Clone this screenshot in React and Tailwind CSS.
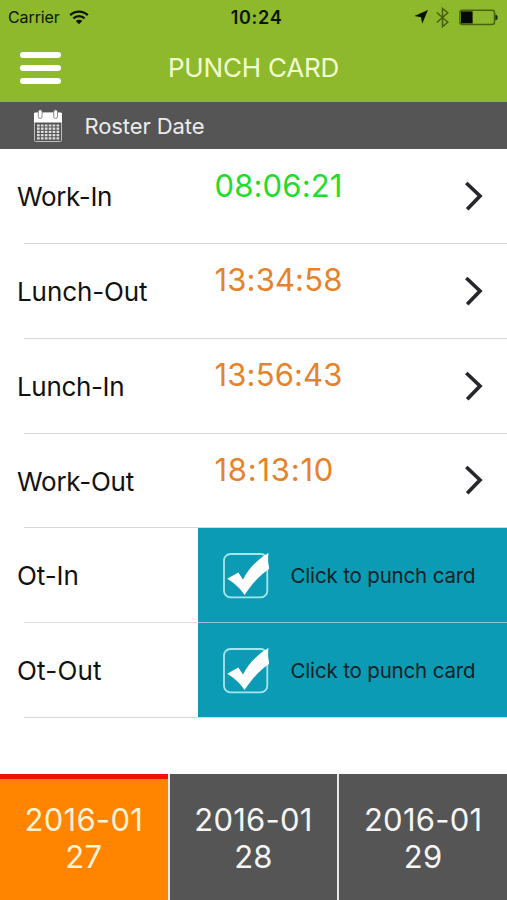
import React, { useState } from 'react';

const PUNCHES = [
  { id: 'work-in', label: 'Work-In', spacing: 'tracking-[-0.35px]', time: '08:06:21', timeClass: 'text-[#1fdd2b] tracking-[0.15px]' },
  { id: 'lunch-out', label: 'Lunch-Out', spacing: 'tracking-[-0.1px]', time: '13:34:58', timeClass: 'text-[#e8822a] tracking-[0.15px]' },
  { id: 'lunch-in', label: 'Lunch-In', spacing: 'tracking-[-0.35px]', time: '13:56:43', timeClass: 'text-[#e8822a] tracking-[0.15px]' },
  { id: 'work-out', label: 'Work-Out', spacing: 'tracking-[-0.25px]', time: '18:13:10', timeClass: 'text-[#e8822a] tracking-[0.75px]' },
  { id: 'ot-in', label: 'Ot-In', spacing: 'tracking-[-0.1px]', time: null },
  { id: 'ot-out', label: 'Ot-Out', spacing: 'tracking-[0.2px]', time: null },
];

const DAYS = [
  { month: '2016-01', day: '27' },
  { month: '2016-01', day: '28' },
  { month: '2016-01', day: '29' },
];

const StatusBar = () => (
  <div className="h-[34px] grid grid-cols-[1fr_60px_1fr] items-center pl-[8px] pr-[9px] text-[#0b1402]">
    <div className="flex items-center gap-[9px]">
      <span className="text-[16px] leading-none tracking-[-0.1px]">Carrier</span>
      <svg width="20" height="15" viewBox="0 0 20 15" fill="none" stroke="currentColor" strokeWidth="2.3">
        <path d="M1.2 5.1a12.7 12.7 0 0 1 17.6 0" />
        <path d="M4.4 8.4a8 8 0 0 1 11.2 0" />
        <path d="M10 14.3l-3.2-3.2a4.5 4.5 0 0 1 6.4 0z" fill="currentColor" stroke="none" />
      </svg>
    </div>
    <span className="pl-[7px] pt-[1px] text-center text-[18px] leading-none font-semibold tracking-[0.7px]">10:24</span>
    <div className="flex items-center justify-end">
      <svg width="14" height="14" viewBox="0 0 14 14" fill="currentColor">
        <path d="M14 0L8.2 13.8 7 7.2 0.3 6z" />
      </svg>
      <svg className="ml-[8px] opacity-55" width="13" height="21" viewBox="0 0 13 21" fill="none" stroke="currentColor" strokeWidth="1.5">
        <path d="M0.8 5.5l11 9.8-5.3 4.3V1.5l5.3 4.2-11 9.8" />
      </svg>
      <svg className="ml-[10px]" width="39" height="17" viewBox="0 0 39 17">
        <rect x="0.9" y="1.2" width="34.6" height="14.3" rx="2.5" fill="none" stroke="#48640f" strokeWidth="1.5" />
        <rect x="2" y="2.4" width="11.6" height="12" fill="#050803" />
        <path d="M36.3 5.5c1.6.2 2.4 1.4 2.4 2.9s-.8 2.7-2.4 2.9z" fill="#1c2a05" />
      </svg>
    </div>
  </div>
);

const CalendarIcon = () => (
  <svg className="block" width="30" height="34" viewBox="0 0 30 34">
    <rect x="1.5" y="3.5" width="27" height="29" rx="1" fill="none" stroke="#bdbdbd" strokeWidth="1" />
    <path d="M1 4h28v9.5H1z" fill="#fff" />
    <g fill="#fff" stroke="#6a6a6a" strokeWidth="0.8">
      <rect x="5.3" y="0.8" width="3.8" height="8.7" rx="1.9" />
      <rect x="20.7" y="0.8" width="3.8" height="8.7" rx="1.9" />
    </g>
    {[16.5, 19.7, 22.9, 26.1, 29.3].map(y => (
      <path key={y} d={`M4 ${y}h22.5`} stroke="#dedede" strokeWidth="2.2" strokeDasharray="2.7 1.2" />
    ))}
  </svg>
);

const CheckIcon = () => (
  <svg className="block shrink-0" width="48" height="48" viewBox="0 0 48 48">
    <rect x="2" y="3" width="43.3" height="43.3" rx="6.5" fill="none" stroke="#a4e6ee" strokeWidth="1.8" />
    <path d="M5.2 27.8L16.3 21.5 21 28.5C26 18.5 34.5 9 46.4 2L46 10.500 47.200 17.800C38 24 30 33 22.5 44 17.5 36.5 11.5 31.5 5.2 27.8z" fill="#fff" />
  </svg>
);

const PunchRow = ({ punch }) => (
  <div className="flex h-[94.8px]">
    <div className={`flex items-center pl-[17px] text-[26px] leading-none text-[#111] ${punch.time ? 'w-[214.5px]' : 'w-[198px]'}`}>
      <span className={`pt-[1.2px] ${punch.spacing}`}>{punch.label}</span>
    </div>
    {punch.time ? (
      <div className="flex flex-1 items-center justify-between pr-[24px]">
        <span className={`pb-[23px] text-[31px] leading-none ${punch.timeClass}`}>{punch.time}</span>
        <svg className="mb-px" width="19" height="30" viewBox="0 0 19 30" fill="none" stroke="#26262b" strokeWidth="3.7">
          <path d="M2.3 2L16 15 3.2 28.2" />
        </svg>
      </div>
    ) : (
      <button className="flex flex-1 items-center bg-[#0b9bb5] pl-[24px] text-left cursor-pointer">
        <div className="pb-[1.5px]">
          <CheckIcon />
        </div>
        <span className="ml-[20.5px] pt-[1.2px] text-[20.5px] leading-none tracking-[-0.16px] text-[#0b2329]">Click to punch card</span>
      </button>
    )}
  </div>
);

const App = () => {
  const [selected, setSelected] = useState(0);

  return (
    <div className="w-full h-[900px] flex flex-col overflow-hidden bg-white font-['Inter','Liberation_Sans',sans-serif]">
      {/* Header */}
      <header className="h-[102px] shrink-0 bg-[#8fb92c]">
        <StatusBar />
        <div className="grid h-[68px] grid-cols-[80px_1fr_80px] items-center">
          <button className="ml-[20px] flex w-[41px] flex-col gap-[6.5px] cursor-pointer">
            <span className="h-[6.5px] rounded-full bg-white" />
            <span className="h-[6.5px] rounded-full bg-white" />
            <span className="h-[6.5px] rounded-full bg-white" />
          </button>
          <h1 className="text-center text-[26px] leading-none tracking-[-0.2px] text-[#f2ffd0]">PUNCH CARD</h1>
        </div>
      </header>

      <div className="h-[47px] shrink-0 flex items-center bg-[#555] pl-[33px]">
        <CalendarIcon />
        <span className="ml-[21.5px] text-[22px] leading-none tracking-[-0.1px] text-[#ebebeb]">Roster Date</span>
      </div>

      {/* Punch list */}
      <main className="flex-1 pt-[0.2px]">
        {PUNCHES.map(punch => (
          <div key={punch.id} className="grid">
            <div className="col-start-1 row-start-1">
              <PunchRow punch={punch} />
            </div>
            <div className={`col-start-1 row-start-1 self-end ml-[24px] h-px ${punch.id === 'ot-in' ? 'bg-[#d0d3d5]/70' : 'bg-[#d8d8d8]'}`} />
          </div>
        ))}
      </main>

      {/* Day tabs */}
      <nav className="h-[126px] shrink-0 grid grid-cols-3 gap-[2px] bg-[#e8e8e8]">
        {DAYS.map((d, i) => (
          <button
            key={d.day}
            onClick={() => setSelected(i)}
            className={`flex flex-col items-center pt-[22px] text-[31px] leading-[37px] tracking-[0.25px] border-t-[5px] cursor-pointer ${
              selected === i
                ? 'bg-[#ff8400] border-[#f01000] text-[#fff3d6]'
                : 'bg-[#555] border-[#555] text-[#f5f5f5]'
            }`}
          >
            <span>{d.month}</span>
            <span>{d.day}</span>
          </button>
        ))}
      </nav>
    </div>
  );
};

export default App;
